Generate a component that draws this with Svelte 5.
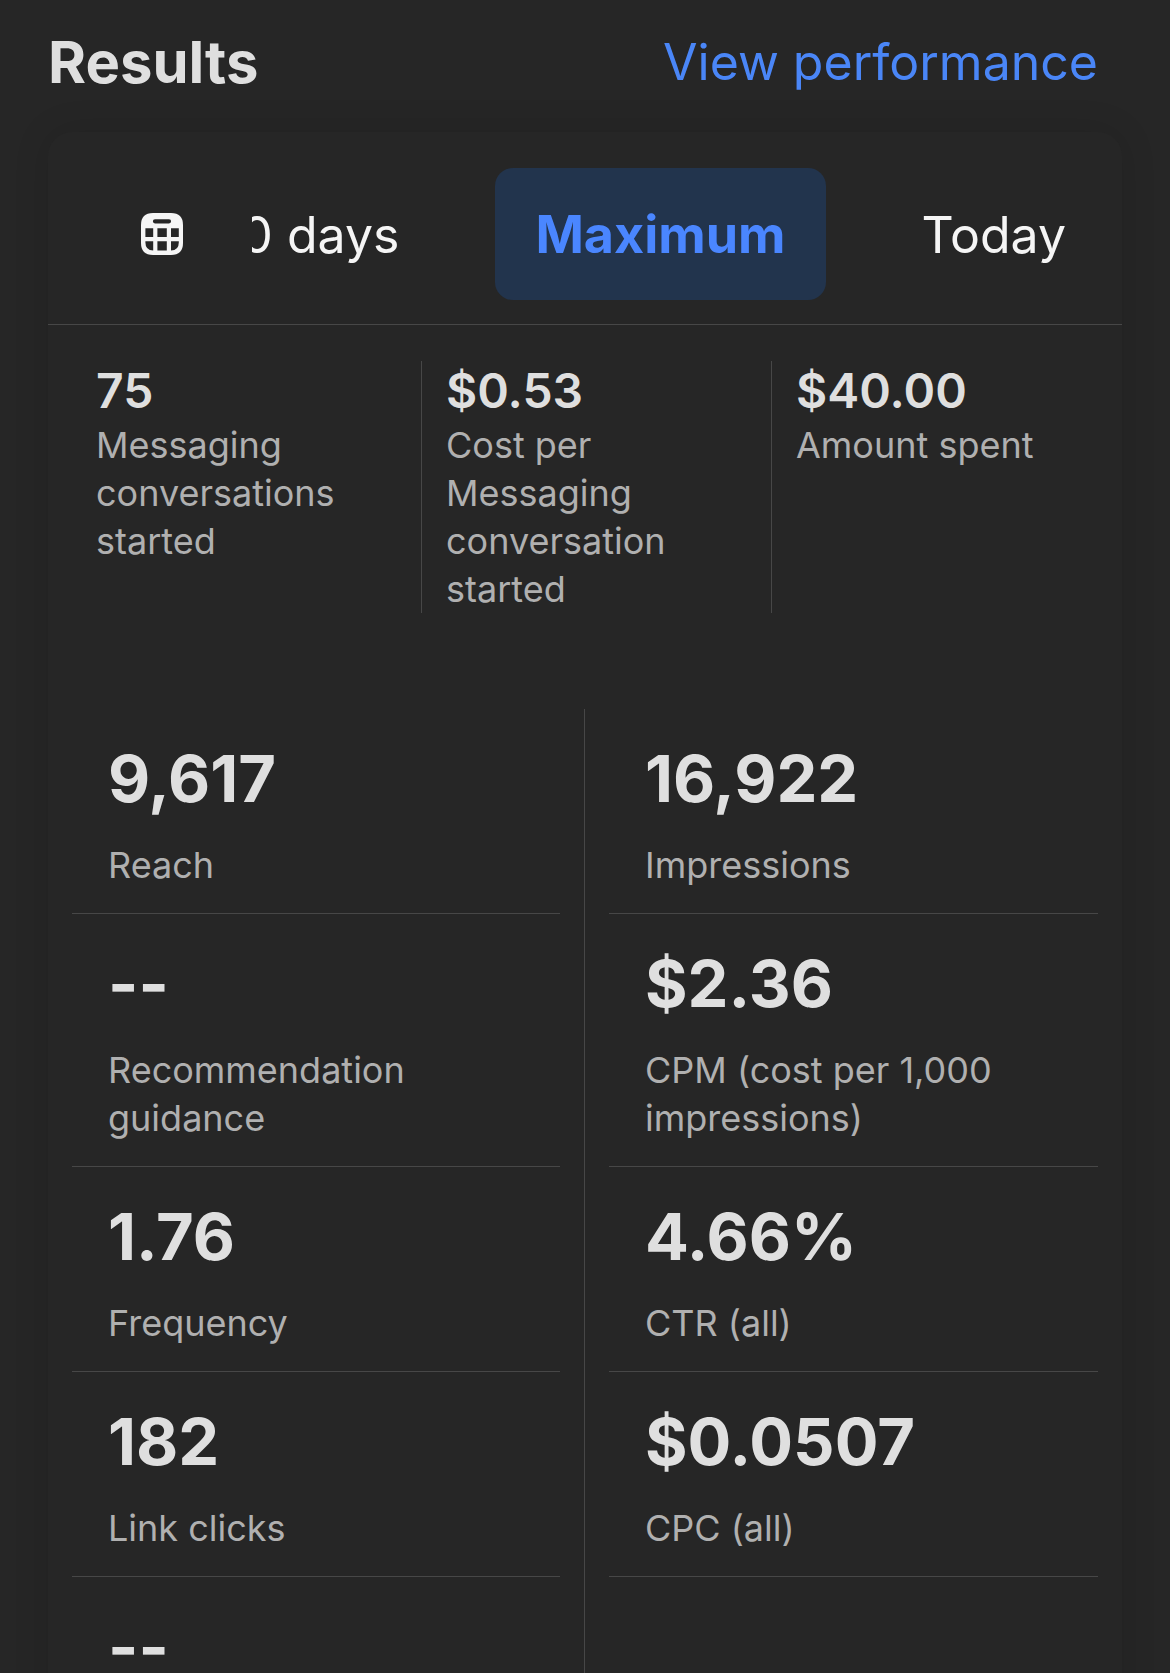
<script>
  let selected = $state('Maximum');
  const ranges = ['Last 30 days', 'Maximum', 'Today'];

  const summary = [
    { value: '75', label: 'Messaging conversations started' },
    { value: '$0.53', label: 'Cost per Messaging conversation started' },
    { value: '$40.00', label: 'Amount spent' }
  ];

  const metrics = [
    { value: '9,617', label: 'Reach' },
    { value: '16,922', label: 'Impressions' },
    { value: '--', label: 'Recommendation guidance' },
    { value: '$2.36', label: 'CPM (cost per 1,000 impressions)' },
    { value: '1.76', label: 'Frequency' },
    { value: '4.66%', label: 'CTR (all)' },
    { value: '182', label: 'Link clicks' },
    { value: '$0.0507', label: 'CPC (all)' },
    { value: '--', label: '' }
  ];
</script>

<main>
  <header>
    <h1>Results</h1>
    <a href="#performance">View performance</a>
  </header>

  <section class="card">
    <div class="toolbar">
      <button class="calendar" aria-label="Choose dates">
        <svg viewBox="0 0 42 42" aria-hidden="true">
          <path
            fill="currentColor"
            fill-rule="evenodd"
            d="M12 0H30Q42 0 42 12V30Q42 42 30 42H12Q0 42 0 30V12Q0 0 12 0Z
               M14 6.2a2.1 2.1 0 0 0 0 4.2h14a2.1 2.1 0 0 0 0-4.2Z
               M4.4 15.2V24H12.2V15.2Z M16.4 15.2V24H25.8V15.2Z M30 15.2V24H37.8V15.2Z
               M4.4 28.2V29.5Q4.4 37.4 12.2 37.4V28.2Z M16.4 28.2V37.4H25.8V28.2Z
               M30 28.2V37.4Q37.8 37.4 37.8 29.5V28.2Z"
          />
        </svg>
      </button>
      <div class="ranges">
        {#each ranges as range}
          <button
            class="range"
            class:active={selected === range}
            aria-pressed={selected === range}
            onclick={() => (selected = range)}>{range}</button>
        {/each}
      </div>
    </div>

    <dl class="summary">
      {#each summary as item}
        <div class="stat">
          <dd>{item.value}</dd>
          <dt>{item.label}</dt>
        </div>
      {/each}
    </dl>

    <dl class="metrics">
      {#each metrics as item}
        <div class="metric">
          <div class="cell">
            <dd>{item.value}</dd>
            {#if item.label}<dt>{item.label}</dt>{/if}
          </div>
        </div>
      {/each}
    </dl>
  </section>
</main>

<style>
  :global(body) {
    background: #262626;
  }

  main {
    height: 100vh;
    overflow-y: auto;
    scrollbar-width: none;
    background: #262626;
    color: #dfdfdf;
    font-family: Inter, 'Liberation Sans', sans-serif;
  }

  header {
    display: flex;
    align-items: center;
    justify-content: space-between;
    box-sizing: border-box;
    min-height: 132px;
    padding: 0 72px 8px 48px;
  }

  h1 {
    margin: 0;
    font-size: 58px;
    line-height: 72px;
    font-weight: 700;
  }

  a {
    color: #4a86f7;
    font-size: 50px;
    line-height: 72px;
    text-decoration: none;
  }

  .card {
    margin: 0 48px;
    border-radius: 24px;
    background: #262626;
    box-shadow: 0 0 36px rgba(0, 0, 0, 0.12);
  }

  .toolbar {
    display: flex;
    padding: 36px 0 24px 24px;
    border-bottom: 1px solid #474747;
  }

  button {
    border: 0;
    background: none;
    color: #f5f5f5;
    font-family: inherit;
    cursor: pointer;
  }

  .calendar {
    display: grid;
    place-items: center;
    flex: none;
    width: 180px;
    padding: 0;
  }

  .calendar svg {
    width: 42px;
    height: 42px;
  }

  .ranges {
    display: flex;
    flex: 1;
    justify-content: flex-end;
    gap: 56px;
    min-width: 0;
    padding-right: 16px;
    overflow: hidden;
  }

  .range {
    flex: none;
    padding: 31px 40px 29px;
    border-radius: 18px;
    font-size: 50px;
    line-height: 72px;
    white-space: nowrap;
  }

  .active {
    background: #22344d;
    color: #4a86ff;
    font-size: 52px;
    font-weight: 700;
  }

  dl,
  dd,
  dt {
    margin: 0;
  }

  dt {
    color: #b0b0b0;
    font-size: 36px;
    line-height: 48px;
  }

  .summary {
    display: grid;
    grid-template-columns: repeat(3, 1fr);
    padding: 36px 0 96px 24px;
  }

  .stat {
    padding: 0 24px;
    border-right: 1px solid #474747;
  }

  .stat:last-child {
    border-right: 0;
  }

  .stat dd {
    font-size: 48px;
    line-height: 60px;
    font-weight: 600;
  }

  .metrics {
    display: grid;
    grid-template-columns: 1fr 1fr;
  }

  .metric {
    display: flex;
    padding: 0 24px;
  }

  .metric:nth-child(odd) {
    border-right: 1px solid #474747;
  }

  .cell {
    flex: 1;
    padding: 32px 36px 24px;
    border-bottom: 1px solid #474747;
  }

  .cell dd {
    margin-bottom: 24px;
    font-size: 65px;
    line-height: 76px;
    font-weight: 700;
  }
</style>
